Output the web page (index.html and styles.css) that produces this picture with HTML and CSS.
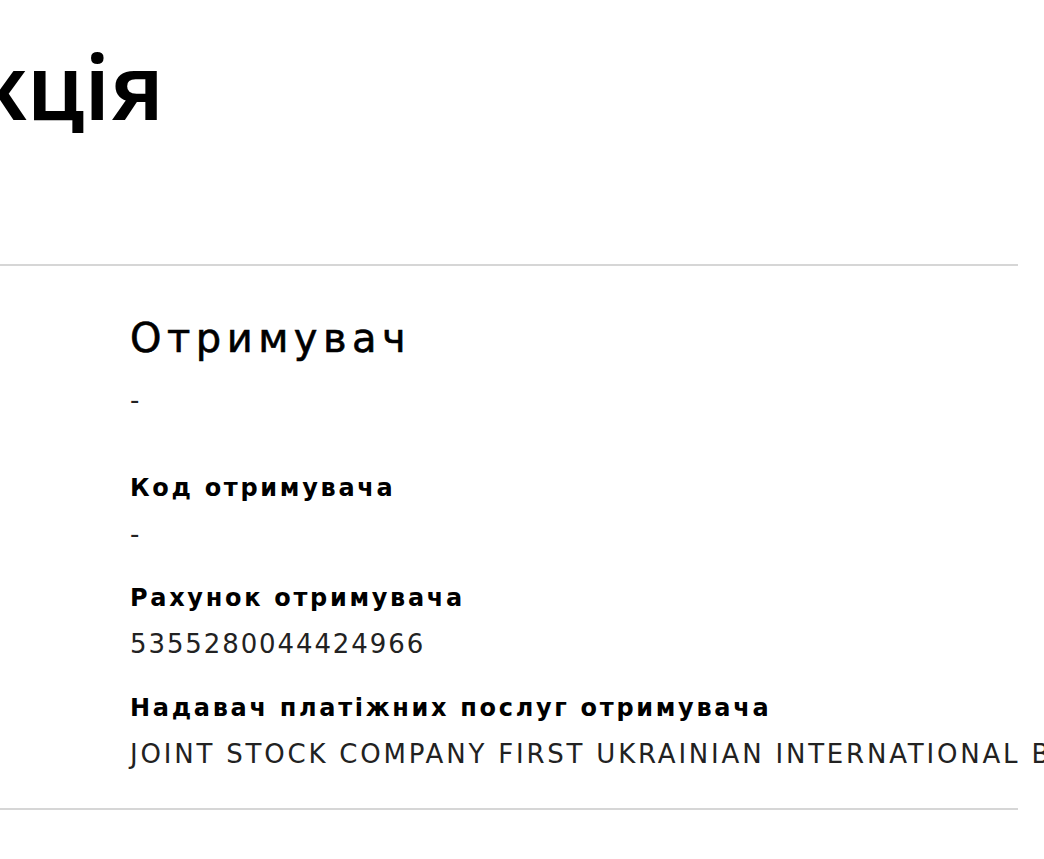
FILE: index.html
```html
<!DOCTYPE html>
<html lang="uk">
<head>
    <meta charset="UTF-8">
    <meta name="viewport" content="width=device-width, initial-scale=1.0">
    <title>Транзакція</title>
    <link rel="stylesheet" href="styles.css">
</head>
<body>
    <div class="page">
        <h1 class="title">Транзакція</h1>

        <div class="section">
            <h2 class="section-title">Отримувач</h2>
            <p class="value value-first">-</p>

            <div class="field">
                <div class="label">Код отримувача</div>
                <div class="value">-</div>
            </div>
            <div class="field">
                <div class="label">Рахунок отримувача</div>
                <div class="value">5355280044424966</div>
            </div>
            <div class="field">
                <div class="label">Надавач платіжних послуг отримувача</div>
                <div class="value value-wide">JOINT STOCK COMPANY FIRST UKRAINIAN INTERNATIONAL BANK</div>
            </div>
        </div>
    </div>
</body>
</html>
```

FILE: styles.css
```css
body {
    margin: 0;
    padding: 0;
    background-color: #ffffff;
    font-family: "DejaVu Sans", "Noto Sans", sans-serif;
    color: #000;
    overflow: hidden;
}

.page {
    width: 1018px;
    white-space: nowrap;
}

.title {
    margin: 0 0 0 -338px;
    padding-top: 27px;
    font-family: "Noto Sans", sans-serif;
    font-size: 90px;
    font-weight: 600;
    line-height: 116px;
    height: 237px;
}

.section {
    border-top: 2px solid #d6d6d6;
    border-bottom: 2px solid #d6d6d6;
    padding: 44px 0 31px 130px;
}

.section-title {
    margin: 0;
    font-size: 40px;
    font-weight: 400;
    letter-spacing: 5.5px;
    line-height: 56px;
    -webkit-text-stroke: 0.6px #000;
}

.value-first {
    margin: 11px 0 42px;
}

.field {
    margin-bottom: 18px;
}

.field:last-child {
    margin-bottom: 0;
}

.label {
    font-size: 24px;
    font-weight: 700;
    letter-spacing: 2.7px;
    line-height: 46px;
}

.value {
    font-size: 26px;
    letter-spacing: 1.9px;
    line-height: 46px;
    color: #222;
}

.value-wide {
    letter-spacing: 2.8px;
}
```
